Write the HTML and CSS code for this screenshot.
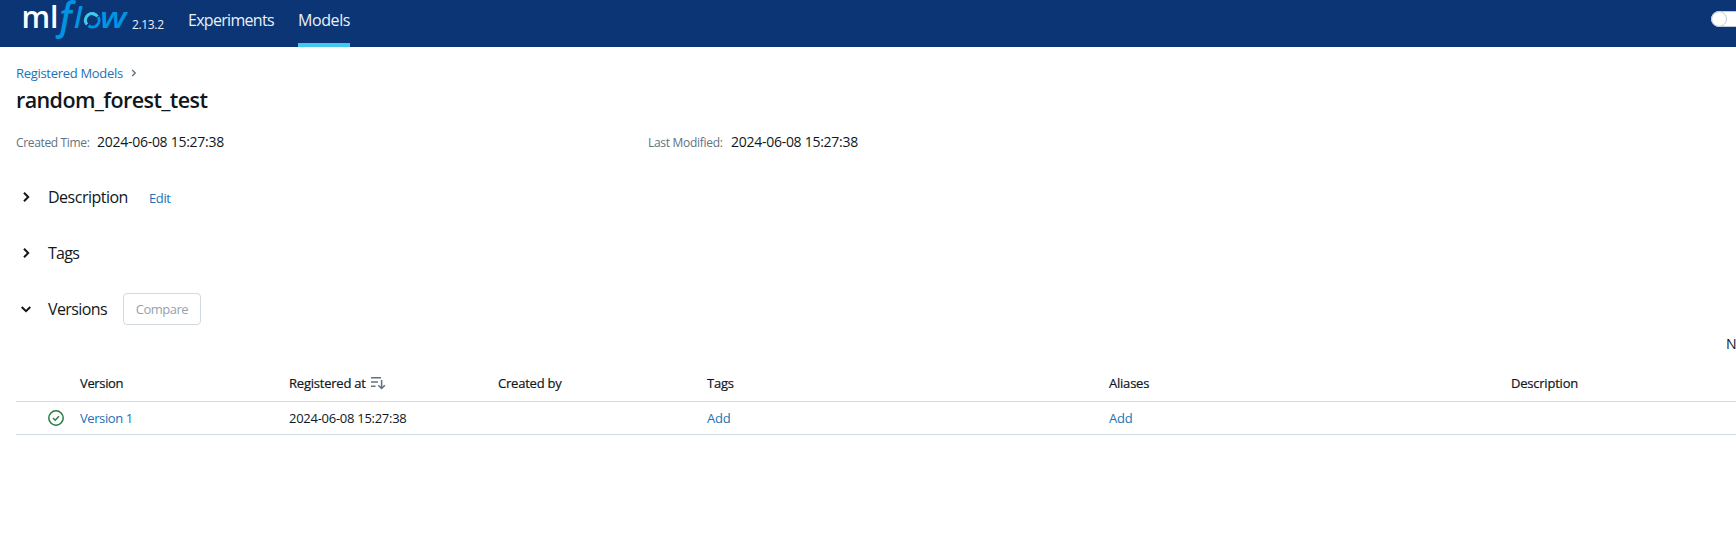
FILE: index.html
```html
<!DOCTYPE html>
<html lang="en">
<head>
<meta charset="utf-8">
<title>random_forest_test - MLflow Model</title>
<link rel="stylesheet" href="styles.css">
</head>
<body>
<header class="navbar">
  <div class="logo">
    <svg width="108" height="40" viewBox="0 0 108 40" role="img" aria-label="mlflow">
      <text class="logo-ml" x="-2.5" y="28" textLength="37" lengthAdjust="spacingAndGlyphs">ml</text>
      <text class="logo-f" x="32" y="29" textLength="20" lengthAdjust="spacingAndGlyphs">ƒ</text>
      <text class="logo-flow" x="50" y="28">l</text>
      <path class="ring-light" d="M63 24.5A6.7 6.7 0 0 1 70.5 14"/>
      <path class="ring-dark" d="M74.2 17A6.7 6.7 0 0 1 64.5 25.8"/>
      <path class="ring-light" d="M69 13.7A6.7 6.7 0 0 1 73.5 16.5"/>
      <text class="logo-flow" x="76" y="28" textLength="26.5" lengthAdjust="spacingAndGlyphs">w</text>
    </svg>
  </div>
  <span class="release">2.13.2</span>
  <nav class="nav">
    <a class="nav-link nav-experiments">Experiments</a>
    <a class="nav-link nav-active">Models</a>
  </nav>
  <span class="switch"><span class="knob"></span></span>
</header>
<main class="page">
  <div class="breadcrumb">
    <a class="link crumb">Registered Models</a>
    <svg class="crumb-arrow" width="6" height="8" viewBox="0 0 6 8"><path d="M1.2 1l3 3-3 3"/></svg>
  </div>
  <h1 class="title">random_forest_test</h1>
  <div class="meta">
    <div class="meta-item"><span class="meta-label created">Created Time:</span><span class="meta-value">2024-06-08 15:27:38</span></div>
    <div class="meta-item"><span class="meta-label modified">Last Modified:</span><span class="meta-value">2024-06-08 15:27:38</span></div>
  </div>
  <section class="section">
    <svg class="chevron" width="12" height="12" viewBox="0 0 12 12"><path d="M4 1.7L8.2 6 4 10.3"/></svg>
    <h2 class="heading">Description</h2>
    <a class="link edit">Edit</a>
  </section>
  <section class="section">
    <svg class="chevron" width="12" height="12" viewBox="0 0 12 12"><path d="M4 1.7L8.2 6 4 10.3"/></svg>
    <h2 class="heading tags-heading">Tags</h2>
  </section>
  <section class="section">
    <svg class="chevron" width="12" height="12" viewBox="0 0 12 12"><path d="M1.7 4L6 8.2 10.3 4"/></svg>
    <h2 class="heading versions-heading">Versions</h2>
    <button class="compare" disabled>Compare</button>
  </section>
  <div class="toggle-row">N</div>
  <div class="table">
    <div class="row head">
      <span></span>
      <span class="h-version">Version</span>
      <span class="sortable"><span>Registered at</span>
        <svg width="16" height="16" viewBox="0 0 16 16"><path d="M1 2.8h10M1 7h7M1 11.2h4.5M11.6 5v8.5M8.3 10.2l3.3 3.3 3.3-3.3"/></svg>
      </span>
      <span>Created by</span>
      <span>Tags</span>
      <span>Aliases</span>
      <span>Description</span>
    </div>
    <div class="row body">
      <span class="status"><svg width="16" height="16" viewBox="0 0 16 16"><circle cx="8" cy="8" r="7.2"/><path d="M5 8l2.2 2.2L11 6.3"/></svg></span>
      <a class="link v-link">Version 1</a>
      <span class="date">2024-06-08 15:27:38</span>
      <span></span>
      <a class="link add">Add</a>
      <a class="link add">Add</a>
      <span></span>
    </div>
  </div>
</main>
</body>
</html>
```
FILE: styles.css
```css
* { box-sizing: border-box; }
body {
  margin: 0;
  height: 544px;
  overflow: hidden;
  background: #fff;
  color: #11171c;
  font: 13px/20px "Open Sans", "Noto Sans", sans-serif;
}
.navbar {
  display: flex;
  height: 47px;
  padding-left: 24px;
  background: #0b3574;
  color: #e7f1fb;
}
.logo { width: 108px; flex: none; }
.logo svg { display: block; overflow: visible; }
.logo text { font-family: "Open Sans", "Noto Sans", sans-serif; font-weight: 600; }
.logo-ml { font-size: 30px; fill: #fff; }
.logo-f { font-size: 39px; font-style: italic; fill: #0194e2; }
.logo-flow { font-size: 29px; font-style: italic; fill: #0194e2; }
.release { width: 56px; flex: none; padding-top: 15px; font-size: 12px; letter-spacing: -0.35px; }
.nav { display: flex; gap: 24px; height: 47px; }
.nav-link { height: 47px; padding-top: 10px; font-size: 16px; white-space: nowrap; letter-spacing: -0.4px; }
.nav-experiments { width: 86px; letter-spacing: -0.7px; }
.nav-active { width: 52px; border-bottom: 4px solid #43c9ed; }
.switch {
  width: 32px;
  height: 16px;
  flex: none;
  margin: 11px -7px 0 auto;
  border: 1px solid #c0cdd8;
  border-radius: 8px;
  background: #fff;
}
.knob {
  display: block;
  width: 16px;
  height: 16px;
  margin: -1px;
  border: 1px solid #c0cdd8;
  border-radius: 50%;
}
.page { padding: 16px 0 0 16px; }
.link { color: #2272b4; }
.breadcrumb { display: flex; align-items: center; height: 20px; white-space: nowrap; }
.crumb { width: 115px; letter-spacing: -0.3px; }
svg path, svg circle { fill: none; }
.ring-light { stroke: #43c9ed; stroke-width: 3; }
.ring-dark { stroke: #0194e2; stroke-width: 3; }
.crumb-arrow path { stroke: #5f7281; stroke-width: 1.4; }
.title { margin: 2px 0 0; font-size: 21.5px; line-height: 29px; font-weight: 600; letter-spacing: -0.6px; }
.meta { display: grid; grid-template-columns: 632px 1fr; margin-top: 18px; }
.meta-item { display: flex; align-items: baseline; white-space: nowrap; }
.meta-label { color: #5f7281; font-size: 12px; letter-spacing: -0.35px; }
.created { width: 81px; }
.modified { width: 83px; letter-spacing: -0.3px; }
.meta-value { font-size: 14px; letter-spacing: -0.27px; }
.section { display: flex; align-items: center; height: 32px; margin-bottom: 24px; padding-left: 4px; }
.meta + .section { margin-top: 28px; }
.chevron { margin-right: 16px; }
.chevron path { stroke: #11171c; stroke-width: 2; }
.heading { margin: 0; font-size: 16px; font-weight: 400; letter-spacing: -0.5px; }
.section .heading { width: 101px; white-space: nowrap; }
.section .tags-heading { letter-spacing: -0.7px; }
.section .versions-heading { width: 75px; letter-spacing: -0.6px; }
.edit { padding-top: 1px; letter-spacing: -0.4px; }
.compare {
  width: 78px;
  height: 32px;
  padding: 0;
  border: 1px solid #d1d9e1;
  border-radius: 4px;
  background: #fff;
  color: #92a4b3;
  font: inherit;
  letter-spacing: -0.5px;
}
.toggle-row { width: 11px; height: 20px; margin: -15px 0 0 1710px; font-size: 14px; }
.table { margin-top: 12px; }
.row {
  display: grid;
  grid-template-columns: 64px 209px 209px 209px 402px 402px 1fr;
  align-items: center;
  border-bottom: 1px solid #d1d9e1;
  white-space: nowrap;
}
.head { height: 36px; padding-bottom: 2px; font-weight: 500; letter-spacing: -0.22px; -webkit-text-stroke: 0.2px; }
.h-version { letter-spacing: -0.35px; }
.body { height: 33px; }
.v-link { letter-spacing: -0.42px; }
.date { letter-spacing: -0.27px; }
.add { letter-spacing: -0.2px; }
.sortable { display: flex; align-items: center; gap: 4px; }
.sortable path { stroke: #5f7281; stroke-width: 1.5; }
.status { display: flex; padding-left: 32px; }
.status circle, .status path { stroke: #277c43; stroke-width: 1.5; }
```
